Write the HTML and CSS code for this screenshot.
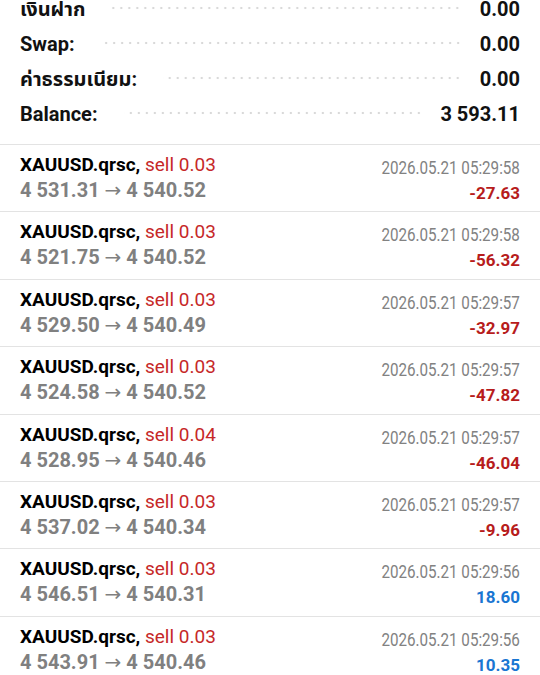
FILE: index.html
```html
<!DOCTYPE html>
<html lang="th">
<head>
  <meta charset="UTF-8">
  <meta name="viewport" content="width=device-width, initial-scale=1.0">
  <title>History</title>
  <link rel="stylesheet" href="styles.css">
</head>
<body>
  <div class="summary">
    <div class="sum-row"><span class="sum-label">เงินฝาก</span><span class="leader"></span><span class="sum-value">0.00</span></div>
    <div class="sum-row"><span class="sum-label">Swap:</span><span class="leader"></span><span class="sum-value">0.00</span></div>
    <div class="sum-row"><span class="sum-label">ค่าธรรมเนียม:</span><span class="leader"></span><span class="sum-value">0.00</span></div>
    <div class="sum-row"><span class="sum-label">Balance:</span><span class="leader"></span><span class="sum-value">3 593.11</span></div>
  </div>
  <ul class="deals">
    <li class="deal">
      <div class="deal-main">
        <div class="deal-title"><span class="symbol">XAUUSD.qrsc,</span> <span class="type">sell 0.03</span></div>
        <div class="deal-prices">4 531.31 <span class="arrow">→</span> 4 540.52</div>
      </div>
      <div class="deal-side">
        <div><span class="deal-time">2026.05.21 05:29:58</span></div>
        <div class="deal-profit loss">-27.63</div>
      </div>
    </li>
    <li class="deal">
      <div class="deal-main">
        <div class="deal-title"><span class="symbol">XAUUSD.qrsc,</span> <span class="type">sell 0.03</span></div>
        <div class="deal-prices">4 521.75 <span class="arrow">→</span> 4 540.52</div>
      </div>
      <div class="deal-side">
        <div><span class="deal-time">2026.05.21 05:29:58</span></div>
        <div class="deal-profit loss">-56.32</div>
      </div>
    </li>
    <li class="deal">
      <div class="deal-main">
        <div class="deal-title"><span class="symbol">XAUUSD.qrsc,</span> <span class="type">sell 0.03</span></div>
        <div class="deal-prices">4 529.50 <span class="arrow">→</span> 4 540.49</div>
      </div>
      <div class="deal-side">
        <div><span class="deal-time">2026.05.21 05:29:57</span></div>
        <div class="deal-profit loss">-32.97</div>
      </div>
    </li>
    <li class="deal">
      <div class="deal-main">
        <div class="deal-title"><span class="symbol">XAUUSD.qrsc,</span> <span class="type">sell 0.03</span></div>
        <div class="deal-prices">4 524.58 <span class="arrow">→</span> 4 540.52</div>
      </div>
      <div class="deal-side">
        <div><span class="deal-time">2026.05.21 05:29:57</span></div>
        <div class="deal-profit loss">-47.82</div>
      </div>
    </li>
    <li class="deal">
      <div class="deal-main">
        <div class="deal-title"><span class="symbol">XAUUSD.qrsc,</span> <span class="type">sell 0.04</span></div>
        <div class="deal-prices">4 528.95 <span class="arrow">→</span> 4 540.46</div>
      </div>
      <div class="deal-side">
        <div><span class="deal-time">2026.05.21 05:29:57</span></div>
        <div class="deal-profit loss">-46.04</div>
      </div>
    </li>
    <li class="deal">
      <div class="deal-main">
        <div class="deal-title"><span class="symbol">XAUUSD.qrsc,</span> <span class="type">sell 0.03</span></div>
        <div class="deal-prices">4 537.02 <span class="arrow">→</span> 4 540.34</div>
      </div>
      <div class="deal-side">
        <div><span class="deal-time">2026.05.21 05:29:57</span></div>
        <div class="deal-profit loss">-9.96</div>
      </div>
    </li>
    <li class="deal">
      <div class="deal-main">
        <div class="deal-title"><span class="symbol">XAUUSD.qrsc,</span> <span class="type">sell 0.03</span></div>
        <div class="deal-prices">4 546.51 <span class="arrow">→</span> 4 540.31</div>
      </div>
      <div class="deal-side">
        <div><span class="deal-time">2026.05.21 05:29:56</span></div>
        <div class="deal-profit gain">18.60</div>
      </div>
    </li>
    <li class="deal">
      <div class="deal-main">
        <div class="deal-title"><span class="symbol">XAUUSD.qrsc,</span> <span class="type">sell 0.03</span></div>
        <div class="deal-prices">4 543.91 <span class="arrow">→</span> 4 540.46</div>
      </div>
      <div class="deal-side">
        <div><span class="deal-time">2026.05.21 05:29:56</span></div>
        <div class="deal-profit gain">10.35</div>
      </div>
    </li>
  </ul>
</body>
</html>
```

FILE: styles.css
```css
body {
  margin: 0;
  padding: 0;
  background: #fff;
  font-family: Roboto, "Noto Sans Thai", "Noto Sans", sans-serif;
  overflow: hidden;
}
.summary {
  margin-top: -8px;
  padding: 0 20px 12px;
}
.sum-row {
  display: flex;
  height: 35px;
  line-height: 35px;
  font-size: 20px;
  font-weight: bold;
  color: #111;
}
.leader {
  flex: 1;
  margin: 0 18px 0 26px;
  background: radial-gradient(circle, #d9d9d9 1px, transparent 1.6px) right 12px / 8px 8px repeat-x;
}
.deals {
  list-style: none;
  margin: 0;
  padding: 0;
}
.deal {
  display: flex;
  justify-content: space-between;
  box-sizing: border-box;
  height: 67.4px;
  padding: 0 20px;
  border-top: 1px solid #e3e3e3;
}
.deal-main {
  padding-top: 7px;
}
.deal-title {
  font-size: 19px;
  line-height: 25px;
}
.symbol {
  font-weight: bold;
  color: #000;
}
.type {
  color: #c62828;
}
.deal-prices {
  font-size: 20px;
  line-height: 26px;
  font-weight: bold;
  color: #808080;
}
.arrow {
  font-family: "DejaVu Sans", sans-serif;
  font-weight: normal;
  font-size: 20px;
}
.deal-side {
  padding-top: 11px;
  text-align: right;
  line-height: 25px;
}
.deal-time {
  display: inline-block;
  font-size: 18.5px;
  color: #828282;
  transform: scaleX(0.82);
  transform-origin: right center;
}
.deal-profit {
  font-size: 17px;
  font-weight: bold;
}
.loss {
  color: #b71c1c;
}
.gain {
  color: #1976d2;
}
```
